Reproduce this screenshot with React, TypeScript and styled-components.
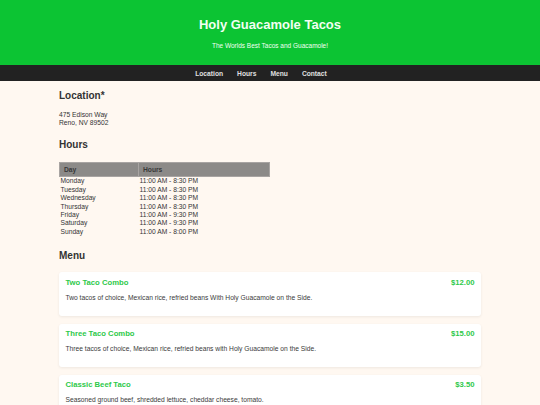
import React from 'react';
import styled, { createGlobalStyle } from 'styled-components';

const GREEN = '#0cc433';
const TITLE_GREEN = '#2ec94a';
const TEXT = '#333333';

const GlobalStyle = createGlobalStyle`
  html, body {
    margin: 0;
    padding: 0;
    background: #fff8f1;
    font-family: "Liberation Sans", Arial, sans-serif;
    color: ${TEXT};
  }
`;

const Header = styled.header`
  background: ${GREEN};
  text-align: center;
  padding: 17px 0 15px;
  color: #f2fff2;
`;

const Title = styled.h1`
  margin: 0;
  font-size: 13px;
  line-height: 16px;
  font-weight: bold;
`;

const Tagline = styled.p`
  margin: 8px 0 0;
  font-size: 6.5px;
  line-height: 9px;
`;

const Nav = styled.nav`
  background: #222222;
  height: 16px;
  display: flex;
  justify-content: center;
  align-items: center;
  gap: 14px;
  padding-right: 18px;
`;

const NavLink = styled.a`
  color: #e0e0e0;
  font-size: 6.7px;
  font-weight: bold;
  text-decoration: none;
`;

const Main = styled.main`
  width: 422px;
  margin: 0 auto;
  padding-top: 8px;
`;

const SectionTitle = styled.h2<{ $gap?: number }>`
  margin: ${({ $gap = 12 }) => $gap}px 0 0;
  font-size: 10px;
  line-height: 13px;
  font-weight: bold;
  color: ${TEXT};
`;

const Address = styled.p`
  margin: 9px 0 0;
  font-size: 6.7px;
  line-height: 7.7px;
`;

const Table = styled.table`
  margin-top: 11px;
  width: 211px;
  border-collapse: collapse;
  font-size: 6.7px;
`;

const Th = styled.th`
  background: #8c8a88;
  border: 1px solid #a8a4a2;
  text-align: left;
  font-weight: bold;
  color: #383838;
  height: 13px;
  padding: 0 4px;
  &:first-child {
    width: 70px;
  }
`;

const Td = styled.td`
  padding: 0 1px;
  height: 8.4px;
  line-height: 8.4px;
`;

const MenuList = styled.div`
  margin-top: 10px;
  display: flex;
  flex-direction: column;
  gap: 8px;
`;

const Card = styled.div`
  background: #ffffff;
  border-radius: 3px;
  box-shadow: 0 1px 3px rgba(0, 0, 0, 0.07);
  padding: 5.5px 6.5px 13.8px;
`;

const CardHead = styled.div`
  display: flex;
  justify-content: space-between;
  align-items: center;
  color: ${TITLE_GREEN};
  font-size: 7.7px;
  line-height: 10px;
  font-weight: bold;
`;

const CardText = styled.p`
  margin: 6px 0 0;
  font-size: 6.7px;
  line-height: 8px;
  color: #3a3a3a;
`;

const hours = [
  ['Monday', '11:00 AM - 8:30 PM'],
  ['Tuesday', '11:00 AM - 8:30 PM'],
  ['Wednesday', '11:00 AM - 8:30 PM'],
  ['Thursday', '11:00 AM - 8:30 PM'],
  ['Friday', '11:00 AM - 9:30 PM'],
  ['Saturday', '11:00 AM - 9:30 PM'],
  ['Sunday', '11:00 AM - 8:00 PM'],
];

const menu = [
  { name: 'Two Taco Combo', price: '$12.00', desc: 'Two tacos of choice, Mexican rice, refried beans With Holy Guacamole on the Side.' },
  { name: 'Three Taco Combo', price: '$15.00', desc: 'Three tacos of choice, Mexican rice, refried beans with Holy Guacamole on the Side.' },
  { name: 'Classic Beef Taco', price: '$3.50', desc: 'Seasoned ground beef, shredded lettuce, cheddar cheese, tomato.' },
];

const App = () => (
  <>
    <GlobalStyle />
    <Header>
      <Title>Holy Guacamole Tacos</Title>
      <Tagline>The Worlds Best Tacos and Guacamole!</Tagline>
    </Header>
    <Nav>
      <NavLink href="#location">Location</NavLink>
      <NavLink href="#hours">Hours</NavLink>
      <NavLink href="#menu">Menu</NavLink>
      <NavLink href="#contact">Contact</NavLink>
    </Nav>
    <Main>
      <SectionTitle id="location" $gap={0}>Location*</SectionTitle>
      <Address>
        475 Edison Way
        <br />
        Reno, NV 89502
      </Address>

      <SectionTitle id="hours">Hours</SectionTitle>
      <Table>
        <thead>
          <tr>
            <Th>Day</Th>
            <Th>Hours</Th>
          </tr>
        </thead>
        <tbody>
          {hours.map(([day, time]) => (
            <tr key={day}>
              <Td>{day}</Td>
              <Td>{time}</Td>
            </tr>
          ))}
        </tbody>
      </Table>

      <SectionTitle id="menu" $gap={13}>Menu</SectionTitle>
      <MenuList>
        {menu.map((item) => (
          <Card key={item.name}>
            <CardHead>
              <span>{item.name}</span>
              <span>{item.price}</span>
            </CardHead>
            <CardText>{item.desc}</CardText>
          </Card>
        ))}
      </MenuList>
    </Main>
  </>
);

export default App;
